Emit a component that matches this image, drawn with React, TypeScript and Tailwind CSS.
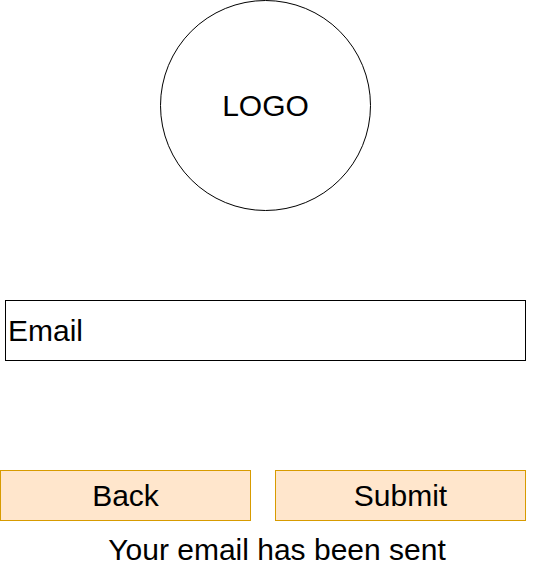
export default function App() {
  return (
    <div className="w-[536px] h-[568px] bg-white text-black font-['Liberation_Sans',Arial,sans-serif] flex flex-col overflow-hidden">
      {/* logo placeholder */}
      <div className="ml-[160px] w-[211px] h-[211px] rounded-full border border-black flex items-center justify-center">
        <span className="text-[30px] leading-[34px]">LOGO</span>
      </div>

      <div className="mt-[89px] ml-[5px] w-[521px] h-[61px] border border-black flex items-center pl-[2px]">
        <span className="text-[30px] leading-[34px]">Email</span>
      </div>

      <div className="mt-[109px] flex gap-[24px] w-[526px]">
        <button className="w-[251px] h-[51px] bg-[#ffe6cc] border border-[#d79b00] text-[30px] leading-[34px]">
          Back
        </button>
        <button className="w-[251px] h-[51px] bg-[#ffe6cc] border border-[#d79b00] text-[30px] leading-[34px]">
          Submit
        </button>
      </div>

      <p className="mt-[12px] w-[554px] text-center text-[30px] leading-[34px]">
        Your email has been sent
      </p>
    </div>
  );
}
